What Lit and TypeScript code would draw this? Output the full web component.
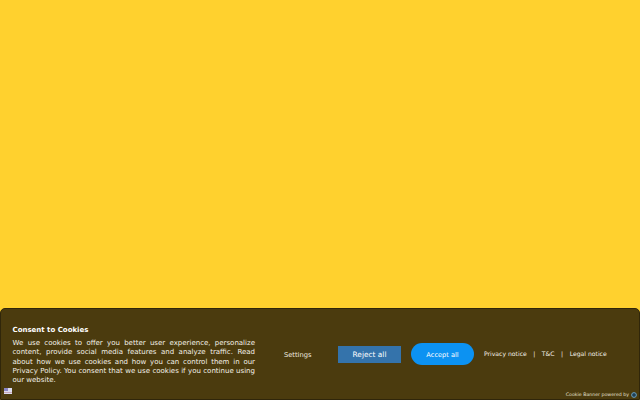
import { LitElement, html, css } from "lit";
import { customElement } from "lit/decorators.js";

@customElement("app-root")
export class AppRoot extends LitElement {
  static styles = css`
    :host {
      display: flex;
      flex-direction: column;
      justify-content: flex-end;
      width: 640px;
      height: 400px;
      background: #ffd12e;
      font-family: "DejaVu Sans", sans-serif;
      overflow: hidden;
      text-rendering: geometricPrecision;
    }
    .banner {
      position: relative;
      box-sizing: border-box;
      height: 92px;
      background: #4b3b0e;
      border: 1px solid #30260a;
      border-radius: 5px 5px 0 0;
      color: #fff;
      display: flex;
      align-items: flex-start;
      padding: 15.5px 0 0 11.5px;
    }
    .text { width: 242.5px; flex: none; }
    h2 {
      margin: 0;
      font-size: 7px;
      line-height: 11px;
      font-weight: 700;
    }
    p {
      margin: 3.5px 0 0;
      font-size: 7px;
      line-height: 9.3px;
      text-align: justify;
      color: #f4f1e8;
    }
    .actions {
      display: flex;
      align-items: center;
      height: 22px;
      margin-top: 18.5px;
    }
    .settings { margin-left: 29px; width: 54px; font-size: 6.7px; color: #f2eee0; padding-top: 1px; }
    .reject {
      width: 63px;
      height: 17px;
      background: #3473ab;
      color: #fff;
      border: 0;
      padding: 1px 0 0;
      font: 7.4px "DejaVu Sans", sans-serif;
    }
    .accept {
      margin-left: 10px;
      width: 63px;
      height: 22px;
      border-radius: 11px;
      background: #0c92f2;
      color: #fff;
      border: 0;
      padding: 2px 0 0;
      font: 6.6px "DejaVu Sans", sans-serif;
    }
    .links {
      margin-left: 10px;
      display: flex;
      gap: 6.5px;
      font-size: 6.1px;
      color: #f4f1e8;
      white-space: nowrap;
    }
    .flag { position: absolute; left: 3px; bottom: 5px; width: 8px; height: 6px; }
    .powered {
      position: absolute;
      right: 2px;
      bottom: 1px;
      display: flex;
      align-items: center;
      gap: 2px;
      font-size: 4.7px;
      color: #e6e1d2;
      white-space: nowrap;
    }
    .powered svg { width: 6px; height: 6px; }
  `;

  render() {
    return html`
      <div class="banner">
        <div class="text">
          <h2>Consent to Cookies</h2>
          <p>We use cookies to offer you better user experience, personalize content, provide social media features and analyze traffic. Read about how we use cookies and how you can control them in our Privacy Policy. You consent that we use cookies if you continue using our website.</p>
        </div>
        <div class="actions">
          <span class="settings">Settings</span>
          <button class="reject">Reject all</button>
          <button class="accept">Accept all</button>
          <div class="links"><span>Privacy notice</span><span>|</span><span>T&amp;C</span><span>|</span><span>Legal notice</span></div>
        </div>
        <svg class="flag" viewBox="0 0 8 6" aria-hidden="true">
          <rect width="8" height="6" fill="#dcdcf0"></rect>
          <rect width="4" height="3" fill="#8a86c4"></rect>
          <rect y="4" width="8" height="1" fill="#c9a9b8"></rect>
        </svg>
        <div class="powered">
          <span>Cookie Banner powered by</span>
          <svg viewBox="0 0 6 6" aria-hidden="true"><circle cx="3" cy="3" r="2.4" fill="#1f3f55" stroke="#6fa9cc" stroke-width="0.9"></circle></svg>
        </div>
      </div>
    `;
  }
}
